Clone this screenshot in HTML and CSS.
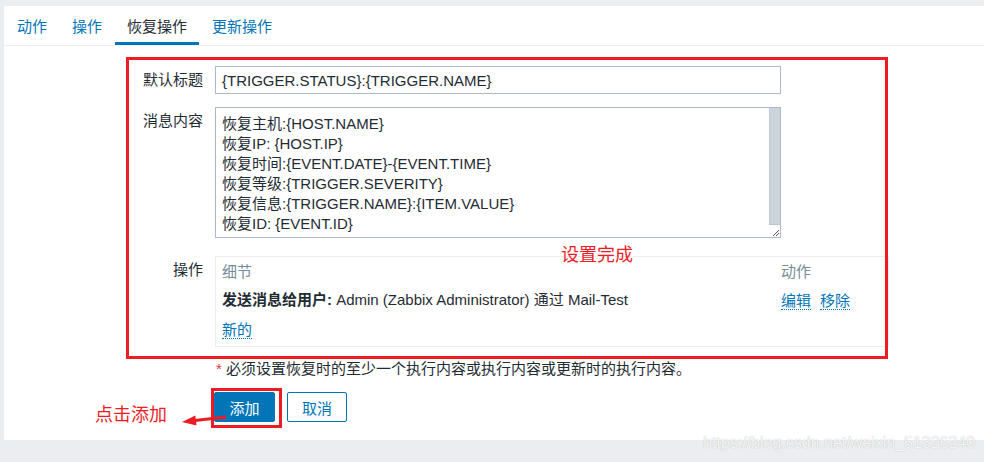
FILE: index.html
```html
<!DOCTYPE html>
<html>
<head>
    <title>恢复操作</title>
    <meta charset="utf-8">
    <link rel="stylesheet" href="styles.css">
</head>
<body>
    <div class="panel">
        <ul class="tabs">
            <li class="tab"><a>动作</a></li>
            <li class="tab"><a>操作</a></li>
            <li class="tab active"><a>恢复操作</a></li>
            <li class="tab"><a>更新操作</a></li>
        </ul>

        <div class="form">
            <div class="row row-title">
                <label class="label">默认标题</label>
                <div class="field">
                    <input class="text-input" type="text" value="{TRIGGER.STATUS}:{TRIGGER.NAME}">
                </div>
            </div>

            <div class="row row-message">
                <label class="label">消息内容</label>
                <div class="field">
                    <div class="textarea">
                        <div class="textarea-text">
                            <div>恢复主机:{HOST.NAME}</div>
                            <div>恢复IP: {HOST.IP}</div>
                            <div>恢复时间:{EVENT.DATE}-{EVENT.TIME}</div>
                            <div>恢复等级:{TRIGGER.SEVERITY}</div>
                            <div>恢复信息:{TRIGGER.NAME}:{ITEM.VALUE}</div>
                            <div>恢复ID: {EVENT.ID}</div>
                        </div>
                        <div class="scrollbar"><div class="thumb"></div></div>
                        <!-- resize grip -->
                        <svg class="grip" width="7" height="7" viewBox="0 0 7 7">
                            <path d="M1 7 L7 1 M4 7 L7 4" stroke="#555" stroke-width="1" fill="none"/>
                        </svg>
                    </div>
                </div>
            </div>

            <div class="row row-ops">
                <label class="label">操作</label>
                <div class="field">
                    <div class="ops">
                        <div class="ops-head">细节</div>
                        <div class="ops-head">动作</div>
                        <div><b>发送消息给用户:</b> Admin (Zabbix Administrator) 通过 Mail-Test</div>
                        <div class="ops-actions"><a class="link">编辑</a><a class="link">移除</a></div>
                        <div><a class="link">新的</a></div>
                        <div></div>
                    </div>
                </div>
            </div>

            <div class="row row-note">
                <div></div>
                <div class="note"><span class="req">*</span> 必须设置恢复时的至少一个执行内容或执行内容或更新时的执行内容。</div>
            </div>

            <div class="row">
                <div></div>
                <div class="buttons">
                    <button class="btn btn-primary">添加</button>
                    <button class="btn btn-alt">取消</button>
                </div>
            </div>
        </div>

        <!-- annotations drawn over the screenshot -->
        <div class="mark mark-form"></div>
        <div class="mark mark-button"></div>
        <div class="note-red note-done">设置完成</div>
        <div class="note-red note-click">点击添加</div>
        <svg class="arrow" width="50" height="20" viewBox="0 0 50 20">
            <line x1="15" y1="10.5" x2="46" y2="7" stroke="#ed1c24" stroke-width="3"/>
            <polygon points="2,12 16.5,15.4 15.3,5.4" fill="#ed1c24"/>
        </svg>
    </div>

    <div class="watermark">https://blog.csdn.net/weixin_51326240</div>
</body>
</html>
```

FILE: styles.css
```css
body {
    margin: 0;
    background-color: #ebeef0;
    color: #1f2c33;
    font-family: "Liberation Sans", Arial, "Noto Sans CJK SC", sans-serif;
    font-size: 15px;
    line-height: 18px;
    height: 462px;
    overflow: hidden;
    position: relative;
}

.panel {
    position: relative;
    margin: 6px 0 0 4px;
    background-color: #fff;
    padding-bottom: 18px;
}

/* Tabs */
.tabs {
    list-style: none;
    margin: 0;
    padding: 0 0 0 1px;
    display: flex;
    height: 40px;
    box-sizing: border-box;
    border-bottom: 1px solid #ebeef0;
}

.tab {
    height: 39px;
    box-sizing: border-box;
    padding: 12px 12px 0;
}

.tab + .tab {
    margin-left: 1px;
}

.tab a {
    color: #0275b8;
}

.tab.active {
    border-bottom: 3px solid #0275b8;
}

.tab.active a {
    color: #1f2c33;
}

/* Form */
.form {
    padding-top: 20px;
}

.row {
    display: grid;
    grid-template-columns: 199px 1fr;
    column-gap: 12px;
}

.row-title {
    margin-bottom: 13px;
}

.row-message {
    margin-bottom: 18px;
}

.row-ops {
    margin-bottom: 13px;
}

.row-note {
    margin-bottom: 14px;
}

.label {
    text-align: right;
    padding-top: 5px;
}

.text-input {
    display: block;
    width: 566px;
    height: 28px;
    box-sizing: border-box;
    border: 1px solid #acbbc2;
    padding: 0 6px;
    font-family: inherit;
    font-size: 15px;
    color: #1f2c33;
    margin: 0;
}

.textarea {
    position: relative;
    display: flex;
    width: 566px;
    height: 131px;
    box-sizing: border-box;
    border: 1px solid #acbbc2;
}

.textarea-text {
    flex: 1;
    padding: 6px 6px 0;
    line-height: 20px;
}

.scrollbar {
    width: 11px;
}

.thumb {
    height: 117px;
    background-color: #ccd5dc;
    border-left: 1px solid #c0cbd3;
    border-bottom: 1px solid #b8c4cc;
    box-sizing: border-box;
}

.grip {
    position: absolute;
    right: 1px;
    bottom: 1px;
}

/* Operations list */
.ops {
    display: grid;
    grid-template-columns: 559px 1fr;
    row-gap: 10px;
    width: 674px;
    box-sizing: border-box;
    border: 1px solid #ebeef0;
    padding: 6px 6px 7px;
}

.ops-head {
    color: #768d99;
}

.ops b {
    font-weight: bold;
}

.link {
    display: inline-block;
    color: #0275b8;
    border-bottom: 1px dotted #0275b8;
    line-height: 19px;
    height: 19px;
    box-sizing: border-box;
}

.ops-actions .link {
    margin-right: 9px;
}

.note {
    padding-left: 1px;
}

.req {
    color: #e33734;
}

/* Buttons */
.buttons {
    display: flex;
    gap: 12px;
    margin-left: -1px;
}

.btn {
    height: 30px;
    padding: 0;
    font-family: inherit;
    font-size: 15px;
    white-space: nowrap;
    border-radius: 2px;
    cursor: pointer;
}

.btn-primary {
    width: 61px;
    background-color: #0275b8;
    border: 1px solid #0275b8;
    color: #fff;
}

.btn-alt {
    width: 60px;
    background-color: #fff;
    border: 1px solid #0275b8;
    color: #0275b8;
}

/* Red annotations */
.mark {
    position: absolute;
    border: 3px solid #ed1c24;
    box-sizing: border-box;
}

.mark-form {
    left: 122px;
    top: 51px;
    width: 762px;
    height: 302px;
}

.mark-button {
    left: 207px;
    top: 382px;
    width: 71px;
    height: 40px;
}

.note-red {
    position: absolute;
    color: #ed1c24;
    font-size: 18px;
    line-height: 20px;
}

.note-done {
    left: 557px;
    top: 239px;
}

.note-click {
    left: 91px;
    top: 399px;
}

.arrow {
    position: absolute;
    left: 176px;
    top: 404px;
}

.watermark {
    position: absolute;
    left: 703px;
    top: 434px;
    font-size: 16px;
    color: rgba(255, 255, 255, 0.9);
    text-shadow: 0 0 1px rgba(0, 0, 0, 0.3);
}
```
